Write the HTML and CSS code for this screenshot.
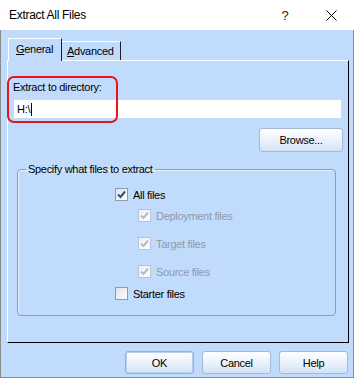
FILE: index.html
```html
<!DOCTYPE html>
<html lang="en">

<head>
    <meta charset="UTF-8" />
    <title>Extract All Files</title>
    <link rel="stylesheet" href="styles.css">
</head>

<body>
    <div class="window">
        <div class="titlebar">
            <span class="title">Extract All Files</span>
            <span class="capbtn">?</span>
            <span class="capbtn">
                <svg width="11" height="11" viewBox="0 0 11 11">
                    <path d="M0.5 0.5 L10.5 10.5 M10.5 0.5 L0.5 10.5" stroke="#000" stroke-width="1" fill="none" />
                </svg>
            </span>
        </div>

        <div class="dialog">
            <div class="tabs">
                <div class="tab active"><u>G</u>eneral</div>
                <div class="tab"><u>A</u>dvanced</div>
            </div>

            <div class="panel">
                <div class="mark"></div>
                <label class="dirlabel">Extract to directory:</label>
                <div class="dirinput">H:\<span class="caret"></span></div>
                <button class="btn browse">Browse...</button>

                <fieldset class="group">
                    <legend>Specify what files to extract</legend>
                    <div class="options">
                        <div class="opt">
                            <span class="chk on">
                                <svg width="9" height="9" viewBox="0 0 9 9"><path d="M1 4.5 L3.5 7 L8 1.5" /></svg>
                            </span>
                            All files
                        </div>
                        <div class="subopts">
                            <div class="opt off">
                                <span class="chk dis">
                                    <svg width="9" height="9" viewBox="0 0 9 9"><path d="M1 4.5 L3.5 7 L8 1.5" /></svg>
                                </span>
                                Deployment files
                            </div>
                            <div class="opt off">
                                <span class="chk dis">
                                    <svg width="9" height="9" viewBox="0 0 9 9"><path d="M1 4.5 L3.5 7 L8 1.5" /></svg>
                                </span>
                                Target files
                            </div>
                            <div class="opt off">
                                <span class="chk dis">
                                    <svg width="9" height="9" viewBox="0 0 9 9"><path d="M1 4.5 L3.5 7 L8 1.5" /></svg>
                                </span>
                                Source files
                            </div>
                        </div>
                        <div class="opt">
                            <span class="chk"></span>
                            Starter files
                        </div>
                    </div>
                </fieldset>
            </div>

            <div class="footer">
                <button class="btn def">OK</button>
                <button class="btn">Cancel</button>
                <button class="btn">Help</button>
            </div>
        </div>
    </div>
</body>

</html>
```

FILE: styles.css
```css
* {
    box-sizing: border-box;
}

body {
    margin: 0;
    background: #fff;
    font-family: "Liberation Sans", Arial, sans-serif;
    font-size: 11px;
    letter-spacing: -0.3px;
    color: #000;
}

.window {
    width: 354px;
    height: 378px;
    display: flex;
    flex-direction: column;
}

/* Barra de titulo */
.titlebar {
    flex: none;
    height: 30px;
    display: flex;
    align-items: center;
    padding-left: 9px;
    background: #fff;
    font-size: 12px;
    letter-spacing: -0.3px;
}

.title {
    flex: 1;
}

.capbtn {
    width: 46px;
    height: 30px;
    display: flex;
    justify-content: center;
    align-items: center;
    font-size: 13px;
    color: #222;
}

.dialog {
    flex: 1;
    display: flex;
    flex-direction: column;
    background: #c1dbfc;
    border: 1px solid #8b8b8b;
    border-top: none;
    padding: 8px 4px 0 6px;
}

/* Abas */
.tabs {
    display: flex;
    align-items: flex-end;
    height: 22px;
    margin-left: 1px;
    position: relative;
    z-index: 2;
}

.tab {
    height: 19px;
    padding: 3px 6px 0 5px;
    border-top: 1px solid #fff;
    border-right: 1px solid #202020;
    line-height: 13px;
}

.tab.active {
    height: 23px;
    margin-bottom: -1px;
    padding: 4px 8px 0 7px;
    border-left: 1px solid #fff;
    background: #c1dbfc;
}

.panel {
    flex: none;
    position: relative;
    height: 283px;
    display: flex;
    flex-direction: column;
    padding: 0 5px;
    border: 1px solid;
    border-color: #fff #000 #000 #fff;
}

/* marcacao vermelha */
.mark {
    position: absolute;
    left: -1px;
    top: 15px;
    width: 111px;
    height: 47px;
    border: 2px solid #e8141c;
    border-radius: 7px;
}

.dirlabel {
    margin-top: 20px;
    line-height: 13px;
}

.dirinput {
    margin: 6px 2px 0 1px;
    height: 18px;
    padding: 2px 3px;
    background: #fff;
    line-height: 14px;
    display: flex;
    align-items: center;
}

.caret {
    width: 1px;
    height: 13px;
    margin-left: 1px;
    background: #000;
}

.btn {
    font-family: inherit;
    font-size: 11px;
    letter-spacing: -0.3px;
    color: #000;
    height: 23px;
    width: 69px;
    padding: 0;
    border: 1px solid #a7b9d2;
    border-radius: 3px;
    background: linear-gradient(#fdfeff, #eef4fc 45%, #d3e2f6);
}

.browse {
    align-self: flex-end;
    margin-top: 10px;
    width: 84px;
    height: 24px;
}

/* Grupo */
.group {
    margin: 11px 7px 0 4px;
    height: 153px;
    padding: 0;
    min-width: 0;
    border: 1px solid #7f9fcc;
    border-radius: 4px;
    box-shadow: inset 1px 1px 0 #e6f0fe;
}

.group legend {
    margin-left: 8px;
    padding: 0 2px;
    line-height: 13px;
}

.options {
    display: flex;
    flex-direction: column;
    margin-top: 12px;
    padding-left: 97px;
}

.subopts {
    display: flex;
    flex-direction: column;
    gap: 15px;
    margin: 8px 0 9px 23px;
}

.opt {
    display: flex;
    align-items: center;
    gap: 5px;
    height: 13px;
}

.opt.off {
    color: #8f9aa8;
}

.chk {
    width: 13px;
    height: 13px;
    display: flex;
    justify-content: center;
    align-items: center;
    border: 1px solid #8e9cb0;
    background: linear-gradient(135deg, #dfe3ea, #fbfcfd);
}

.chk svg path {
    fill: none;
    stroke-width: 2;
}

.chk.on svg path {
    stroke: #2b4e86;
}

.chk.dis {
    border-color: #b8c4d4;
    background: linear-gradient(135deg, #eef1f5, #fbfcfd);
}

.chk.dis svg path {
    stroke: #b4bcc8;
}

/* Botoes do rodape */
.footer {
    display: flex;
    justify-content: flex-end;
    gap: 8px;
    margin-top: 8px;
    padding-right: 1px;
}

.btn.def {
    border-color: #8fb2e2;
    box-shadow: inset 0 0 0 1px #b8d0f0;
}
```
